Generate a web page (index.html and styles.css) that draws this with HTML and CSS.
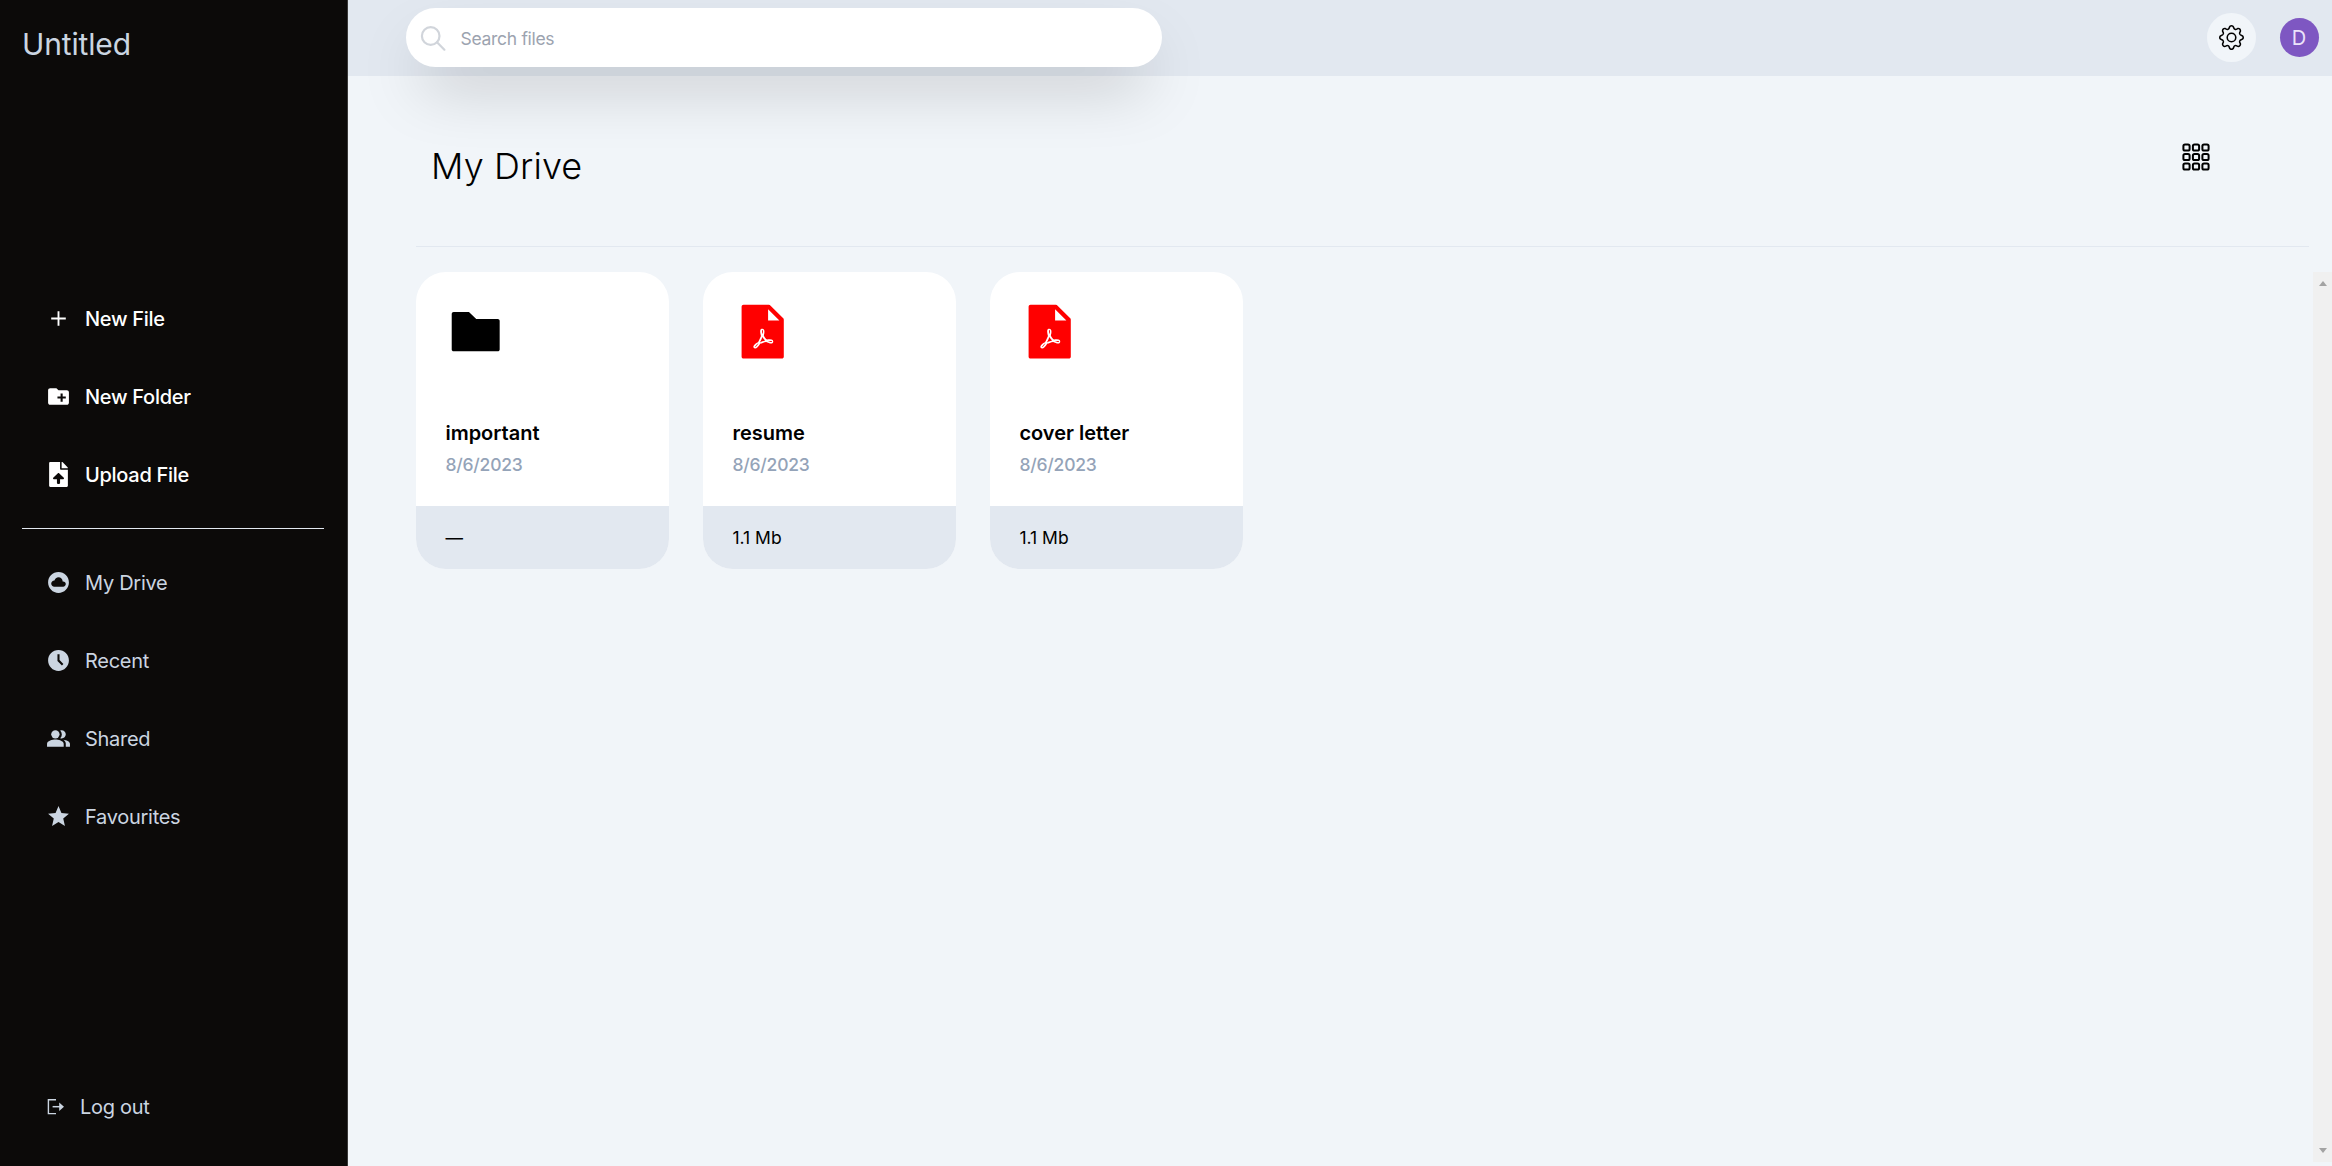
FILE: index.html
```html
<!DOCTYPE html>
<html lang="en">
<head>
<meta charset="utf-8">
<title>My Drive</title>
<link rel="stylesheet" href="styles.css">
</head>
<body>
<div class="app">
  <aside class="sidebar">
    <div class="brand"><span>Untitled</span></div>
    <nav class="nav nav-actions">
      <a class="nav-item"><svg class="icon" viewBox="0 0 24 24"><path d="M12 5v14M5 12h14" fill="none" stroke="currentColor" stroke-width="1.8"/></svg><span>New File</span></a>
      <a class="nav-item"><svg class="icon" viewBox="0 0 24 24"><path d="M20 6h-8l-2-2H4c-1.11 0-1.99.89-1.99 2L2 18c0 1.11.89 2 2 2h16c1.11 0 2-.89 2-2V8c0-1.11-.89-2-2-2zm-1 8h-3v3h-2v-3h-3v-2h3V9h2v3h3v2z"/></svg><span>New Folder</span></a>
      <a class="nav-item"><svg class="icon" viewBox="0 0 384 512"><path d="M224 136V0H24C10.7 0 0 10.7 0 24v464c0 13.3 10.7 24 24 24h336c13.3 0 24-10.7 24-24V160H248c-13.2 0-24-10.8-24-24zm65.18 216.01H224v80c0 8.84-7.16 16-16 16h-32c-8.84 0-16-7.16-16-16v-80H94.82c-14.28 0-21.41-17.29-11.27-27.36l96.42-95.7c6.65-6.61 17.39-6.61 24.04 0l96.42 95.7c10.15 10.07 3.03 27.36-11.25 27.36zM377 105L279.1 7c-4.5-4.5-10.6-7-17-7H256v128h128v-6.1c0-6.3-2.5-12.4-7-16.9z"/></svg><span>Upload File</span></a>
    </nav>
    <hr class="nav-rule">
    <nav class="nav nav-places">
      <a class="nav-item"><svg class="icon" viewBox="0 0 24 24"><path d="M12 2C6.48 2 2 6.48 2 12s4.48 10 10 10 10-4.48 10-10S17.52 2 12 2zm4.5 14H8c-1.66 0-3-1.34-3-3s1.34-3 3-3l.14.01C8.58 8.28 10.13 7 12 7c2.21 0 4 1.79 4 4h.5c1.38 0 2.5 1.12 2.5 2.5S17.88 16 16.5 16z"/></svg><span>My Drive</span></a>
      <a class="nav-item"><svg class="icon" viewBox="0 0 24 24"><path d="M12 2C6.486 2 2 6.486 2 12s4.486 10 10 10 10-4.486 10-10S17.514 2 12 2zm3.293 14.707L11 12.414V6h2v5.586l3.707 3.707-1.414 1.414z"/></svg><span>Recent</span></a>
      <a class="nav-item"><svg class="icon" viewBox="0 0 24 24"><path d="M16.67 13.13C18.04 14.06 19 15.32 19 17v3h4v-3c0-2.18-3.57-3.47-6.33-3.87z"/><circle cx="9" cy="8" r="4"/><path d="M15 12c2.21 0 4-1.79 4-4s-1.79-4-4-4c-.47 0-.91.1-1.33.24a5.98 5.98 0 0 1 0 7.52c.42.14.86.24 1.33.24zM9 13c-2.67 0-8 1.34-8 4v3h16v-3c0-2.66-5.33-4-8-4z"/></svg><span>Shared</span></a>
      <a class="nav-item"><svg class="icon" viewBox="0 0 24 24"><path d="M12 17.27 18.18 21l-1.64-7.03L22 9.24l-7.19-.61L12 2 9.19 8.63 2 9.24l5.46 4.73L5.82 21z"/></svg><span>Favourites</span></a>
    </nav>
    <a class="nav-item logout"><svg class="icon icon-logout" viewBox="0 0 20 20"><path d="M10 2.8H2.4v13.8H10" fill="none" stroke="currentColor" stroke-width="1.4"/><path d="M6.6 9.7H15" fill="none" stroke="currentColor" stroke-width="1.5"/><path d="M13.2 5.5 18 9.7l-4.8 4.2z"/></svg><span>Log out</span></a>
  </aside>

  <div class="main">
    <header class="topbar">
      <div class="search">
        <svg class="search-icon" viewBox="0 0 26 26"><circle cx="10.7" cy="11" r="8.8"/><path d="m17 17.3 7.4 7.4"/></svg>
        <span>Search files</span>
      </div>
      <div class="account">
        <button class="settings"><svg viewBox="0 0 16 16"><path d="M8 4.754a3.246 3.246 0 1 0 0 6.492 3.246 3.246 0 0 0 0-6.492zM5.754 8a2.246 2.246 0 1 1 4.492 0 2.246 2.246 0 0 1-4.492 0z"/><path d="M9.796 1.343c-.527-1.79-3.065-1.79-3.592 0l-.094.319a.873.873 0 0 1-1.255.52l-.292-.16c-1.64-.892-3.433.902-2.54 2.541l.159.292a.873.873 0 0 1-.52 1.255l-.319.094c-1.79.527-1.79 3.065 0 3.592l.319.094a.873.873 0 0 1 .52 1.255l-.16.292c-.892 1.64.901 3.434 2.541 2.54l.292-.159a.873.873 0 0 1 1.255.52l.094.319c.527 1.79 3.065 1.79 3.592 0l.094-.319a.873.873 0 0 1 1.255-.52l.292.16c1.64.893 3.434-.902 2.54-2.541l-.159-.292a.873.873 0 0 1 .52-1.255l.319-.094c1.79-.527 1.79-3.065 0-3.592l-.319-.094a.873.873 0 0 1-.52-1.255l.16-.292c.893-1.64-.902-3.433-2.541-2.54l-.292.159a.873.873 0 0 1-1.255-.52l-.094-.319zm-2.633.283c.246-.835 1.428-.835 1.674 0l.094.319a1.873 1.873 0 0 0 2.693 1.115l.291-.16c.764-.415 1.6.42 1.184 1.185l-.159.292a1.873 1.873 0 0 0 1.116 2.692l.318.094c.835.246.835 1.428 0 1.674l-.319.094a1.873 1.873 0 0 0-1.115 2.693l.16.291c.415.764-.42 1.6-1.185 1.184l-.291-.159a1.873 1.873 0 0 0-2.693 1.116l-.094.318c-.246.835-1.428.835-1.674 0l-.094-.319a1.873 1.873 0 0 0-2.692-1.115l-.292.16c-.764.415-1.6-.42-1.184-1.185l.159-.291A1.873 1.873 0 0 0 1.945 8.93l-.319-.094c-.835-.246-.835-1.428 0-1.674l.319-.094A1.873 1.873 0 0 0 3.06 4.377l-.16-.292c-.415-.764.42-1.6 1.185-1.184l.292.159a1.873 1.873 0 0 0 2.692-1.115l.094-.319z"/></svg></button>
        <div class="avatar">D</div>
      </div>
    </header>

    <section class="content">
      <div class="heading">
        <h1><span>My Drive</span></h1>
        <svg class="grid-toggle" viewBox="0 0 28 28"><g fill="none" stroke="currentColor" stroke-width="2"><rect x="1.4" y="1.4" width="6.2" height="6.2" rx="1.6"/><rect x="10.9" y="1.4" width="6.2" height="6.2" rx="1.6"/><rect x="20.4" y="1.4" width="6.2" height="6.2" rx="1.6"/><rect x="1.4" y="10.9" width="6.2" height="6.2" rx="1.6"/><rect x="10.9" y="10.9" width="6.2" height="6.2" rx="1.6"/><rect x="20.4" y="10.9" width="6.2" height="6.2" rx="1.6"/><rect x="1.4" y="20.4" width="6.2" height="6.2" rx="1.6"/><rect x="10.9" y="20.4" width="6.2" height="6.2" rx="1.6"/><rect x="20.4" y="20.4" width="6.2" height="6.2" rx="1.6"/></g></svg>
      </div>
      <div class="files">
        <div class="cards">
          <article class="card">
            <div class="card-body">
              <svg class="file-icon folder" viewBox="0 0 1024 1024"><path d="M880 298.4H521L403.7 186.2a8.15 8.15 0 0 0-5.5-2.2H144c-17.7 0-32 14.3-32 32v592c0 17.7 14.3 32 32 32h736c17.7 0 32-14.3 32-32V330.4c0-17.7-14.3-32-32-32z"/></svg>
              <h2><span>important</span></h2>
              <time><span>8/6/2023</span></time>
            </div>
            <footer><span>—</span></footer>
          </article>
          <article class="card">
            <div class="card-body">
              <svg class="file-icon pdf" viewBox="0 0 1024 1024"><path id="pdf-shape" fill-rule="evenodd" d="M854.6 288.7c6 6 9.4 14.1 9.4 22.6V928c0 17.7-14.3 32-32 32H192c-17.7 0-32-14.3-32-32V96c0-17.7 14.3-32 32-32h424.7c8.5 0 16.7 3.4 22.7 9.4l215.2 215.3zM790.2 326 602 137.8V326h188.2zM633.22 637.26c-15.18-.5-31.32.67-49.65 2.96-24.3-14.99-40.66-35.58-52.28-65.83l1.07-4.38 1.24-5.18c4.3-18.13 6.61-31.36 7.3-44.7.52-10.07-.04-19.36-1.83-27.97-3.3-18.59-16.45-29.46-33.02-30.13-15.45-.63-29.65 8-33.28 21.37-5.91 21.62-2.45 50.07 10.08 98.59-15.96 38.05-37.05 82.66-51.2 107.54-18.89 9.74-33.6 18.6-45.96 28.42-16.3 12.97-26.48 26.3-29.28 40.3-1.36 6.49.69 14.97 5.36 21.92 5.3 7.88 13.28 13 22.85 13.74 24.15 1.87 53.83-23.03 86.6-79.26 3.29-1.1 6.77-2.26 11.02-3.7l11.9-4.02c7.53-2.54 12.99-4.36 18.39-6.11 23.4-7.62 41.1-12.43 57.2-15.17 27.98 14.98 60.32 24.8 82.1 24.8 17.98 0 30.13-9.32 34.52-23.99 3.85-12.88.8-27.82-7.48-36.08-8.56-8.41-24.3-12.43-45.65-13.12zM385.23 765.68v-.36l.13-.34a54.86 54.86 0 0 1 5.6-10.76c4.28-6.58 10.17-13.5 17.47-20.87 3.92-3.95 8-7.8 12.79-12.12 1.07-.96 7.91-7.05 9.19-8.25l11.17-10.4-8.12 12.93c-12.32 19.64-23.46 33.78-33 43-3.51 3.4-6.6 5.9-9.1 7.51a16.43 16.43 0 0 1-2.61 1.42c-.41.17-.77.27-1.13.3a2.2 2.2 0 0 1-1.12-.15 2.07 2.07 0 0 1-1.27-1.91zM511.17 547.4l-2.26 4-1.4-4.38c-3.1-9.83-5.38-24.64-6.01-38-.72-15.2.49-24.32 5.29-24.32 6.74 0 9.83 10.8 10.07 27.05.22 14.28-2.03 29.14-5.7 35.65zm-5.81 58.46 1.53-4.05 2.09 3.8c11.69 21.24 26.86 38.96 43.54 51.31l3.6 2.66-4.39.9c-16.33 3.38-31.54 8.46-52.34 16.85 2.17-.88-21.62 8.86-27.64 11.17l-5.25 2.01 2.8-4.88c12.35-21.5 23.76-47.32 36.05-79.77zm157.62 76.26c-7.86 3.1-24.78.33-54.57-12.39l-7.56-3.22 8.2-.6c23.3-1.73 39.8-.45 49.42 3.07 4.1 1.5 6.83 3.39 8.04 5.55a4.64 4.64 0 0 1-1.36 6.31 6.7 6.7 0 0 1-2.17 1.28z"/></svg>
              <h2><span>resume</span></h2>
              <time><span>8/6/2023</span></time>
            </div>
            <footer><span>1.1 Mb</span></footer>
          </article>
          <article class="card">
            <div class="card-body">
              <svg class="file-icon pdf" viewBox="0 0 1024 1024"><use href="#pdf-shape"/></svg>
              <h2><span>cover letter</span></h2>
              <time><span>8/6/2023</span></time>
            </div>
            <footer><span>1.1 Mb</span></footer>
          </article>
        </div>
        <div class="scrollbar"><i class="arrow-up"></i><i class="arrow-down"></i></div>
      </div>
    </section>
  </div>
</div>
</body>
</html>
```
FILE: styles.css
```css
* { box-sizing: border-box; }
body {
  margin: 0;
  font-family: Inter, "Liberation Sans", sans-serif;
  font-size: 20px;
  line-height: 30px;
  color: #000;
  background: #f1f5f9;
}
h1, h2 { margin: 0; }
svg { display: block; flex: none; fill: currentColor; }

.app { display: flex; height: 1166px; overflow: hidden; }

.sidebar {
  display: flex;
  flex-direction: column;
  width: 348px;
  flex: none;
  color: #cbd5e1;
  background: #0c0a09;
  border-right: 1px solid #3a3938;
}
.brand { padding: 24px 22px 0; height: 279.6px; font-size: 30px; line-height: 40px; letter-spacing: -.15px; }
.nav-item { display: flex; align-items: center; gap: 14px; height: 78px; padding-left: 46px; letter-spacing: -.28px; }
.nav-actions { color: #fff; font-weight: 500; }
.nav-places span { padding-top: 1px; }
.icon { width: 25px; height: 25px; }
.nav-rule { width: 302px; height: 1px; margin: 14.4px 0 14.4px 22px; border: 0; background: #e2e8f0; }
.logout { margin-top: auto; height: 30px; margin-bottom: 44px; gap: 14px; padding-left: 46px; }
.icon-logout { width: 20px; height: 20px; }

.main { display: flex; flex-direction: column; flex: 1; min-width: 0; }
.topbar {
  display: flex;
  align-items: flex-start;
  justify-content: space-between;
  height: 76px;
  flex: none;
  padding: 8px 13.5px 0 58px;
  background: #e2e8f0;
}
.search {
  display: flex;
  align-items: center;
  gap: 14.5px;
  width: 756px;
  height: 59px;
  padding-left: 14px;
  border-radius: 30px;
  font-size: 17.5px;
  letter-spacing: -.3px;
  color: #9ca3af;
  background: #fff;
  box-shadow: 0 31px 62px -15px rgba(0, 0, 0, .25);
}
.search span { padding-top: 2px; }
.search-icon { width: 26px; height: 26px; fill: none; stroke: #d1d5db; stroke-width: 2.2; stroke-linecap: round; }
.account { display: flex; align-items: center; gap: 24px; padding-top: 5px; }
.settings {
  display: grid;
  place-items: center;
  width: 49px;
  height: 49px;
  padding: 0;
  border: 0;
  border-radius: 50%;
  color: #000;
  background: #f1f5f9;
}
.settings svg { width: 25px; height: 25px; }
.avatar {
  display: grid;
  place-items: center;
  width: 39px;
  height: 39px;
  border-radius: 50%;
  color: #ece3fa;
  background: #7e57c2;
}

.content { display: flex; flex-direction: column; flex: 1; padding-left: 68px; }
.heading {
  display: flex;
  justify-content: space-between;
  height: 171px;
  margin-right: 23px;
  padding: 67px 99px 0 15px;
  border-bottom: 1px solid #e2e8f0;
}
h1 { font-size: 36px; line-height: 47px; font-weight: 350; letter-spacing: .1px; }
.grid-toggle { width: 28px; height: 28px; }
.files { display: flex; flex: 1; justify-content: space-between; margin: 25px 0 4px; }
.cards { display: flex; align-items: flex-start; gap: 34px; }
.card { width: 253px; border-radius: 30px; overflow: hidden; background: #fff; }
.card-body { height: 234px; padding: 29px 29.4px; }
.file-icon { width: 61.4px; height: 61.4px; }
.pdf { color: #f00; }
h2 { margin-top: 55.6px; font-size: 20px; line-height: 30px; font-weight: 600; }
time { display: block; padding-top: 2px; font-size: 17.5px; line-height: 30px; font-weight: 500; letter-spacing: -.2px; color: #94a3b8; }
.card footer { height: 63px; padding-left: 29.4px; font-size: 17.5px; line-height: 63px; background: #e2e8f0; }

.scrollbar {
  display: flex;
  flex-direction: column;
  align-items: center;
  justify-content: space-between;
  width: 19px;
  padding: 9px 0;
  background: #f0f0f0;
}
.arrow-up, .arrow-down { border: 4.5px solid transparent; }
.arrow-up { border-top: 0; border-bottom: 5px solid #a3a3a3; }
.arrow-down { border-bottom: 0; border-top: 5px solid #a3a3a3; }
```
